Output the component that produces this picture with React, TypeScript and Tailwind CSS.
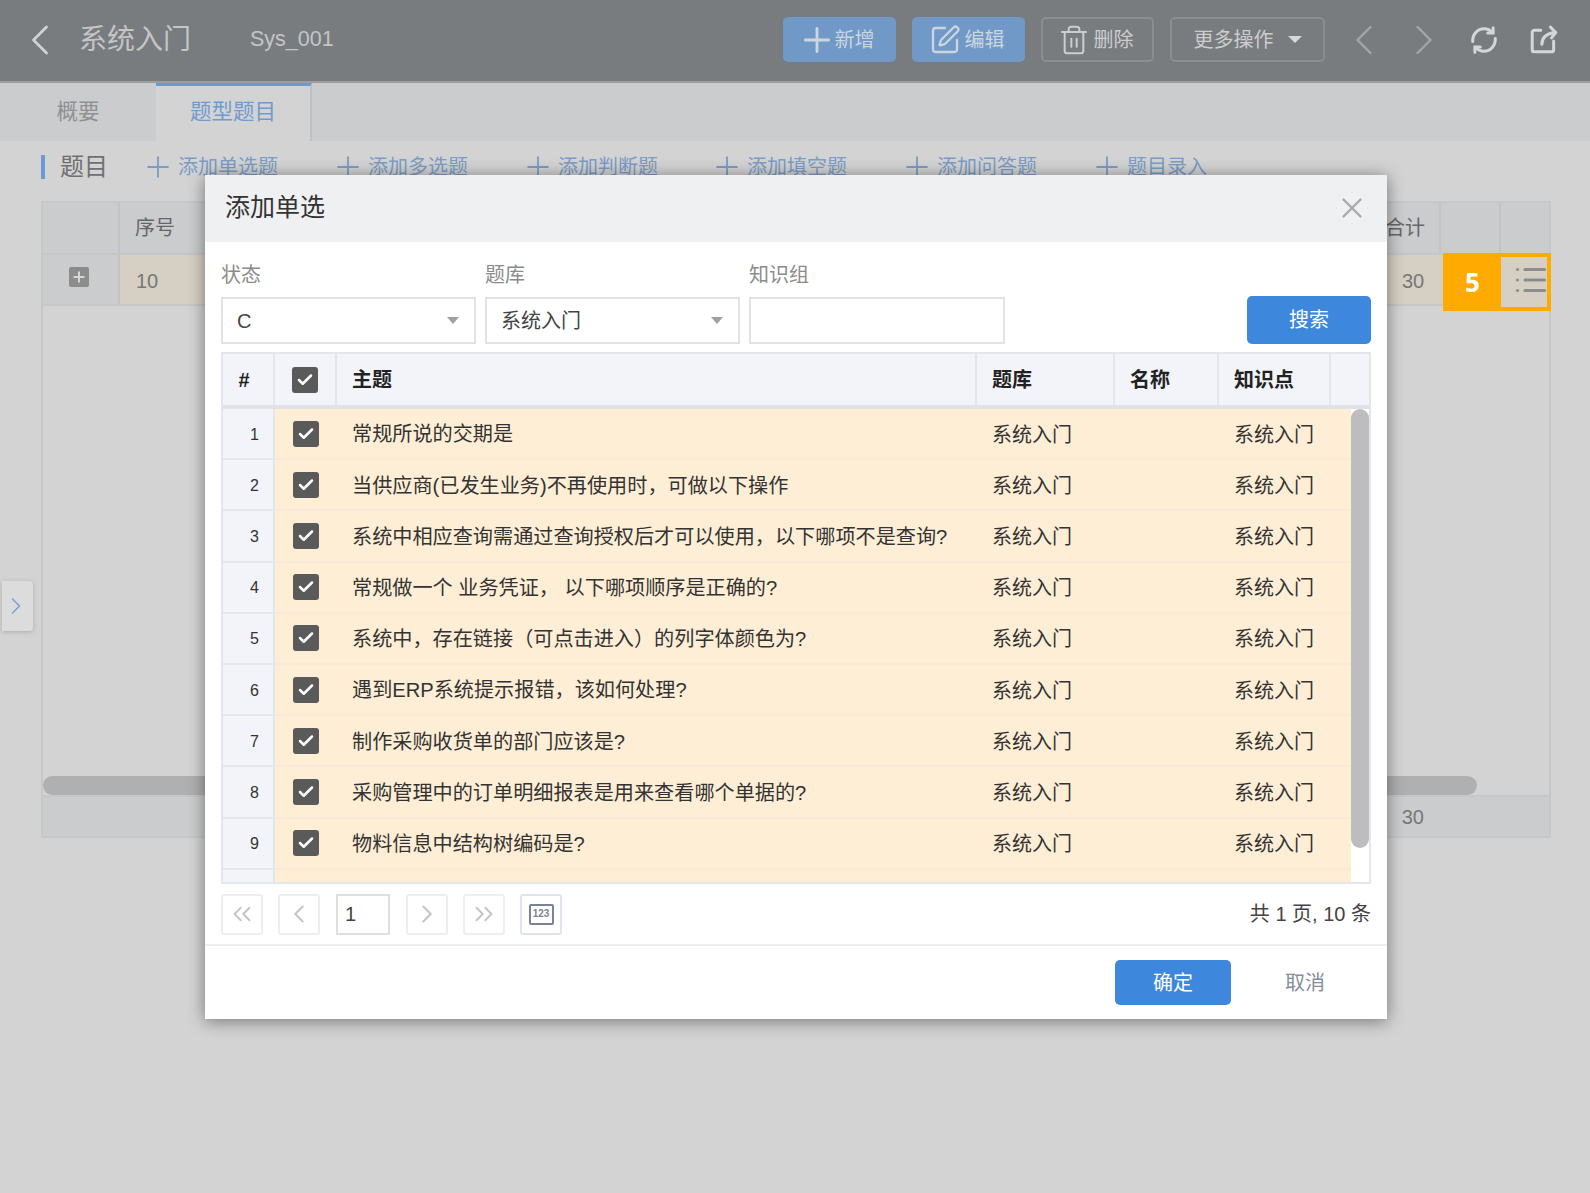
import { Plus, ChevronLeft, ChevronRight, ChevronsLeft, ChevronsRight, X, Check, SquarePen, Trash2, List } from "lucide-react";

const rows = [
  "常规所说的交期是",
  "当供应商(已发生业务)不再使用时，可做以下操作",
  "系统中相应查询需通过查询授权后才可以使用，以下哪项不是查询?",
  "常规做一个 业务凭证， 以下哪项顺序是正确的?",
  "系统中，存在链接（可点击进入）的列字体颜色为?",
  "遇到ERP系统提示报错，该如何处理?",
  "制作采购收货单的部门应该是?",
  "采购管理中的订单明细报表是用来查看哪个单据的?",
  "物料信息中结构树编码是?",
  "",
];

const addItems = [
  { label: "添加单选题", w: "w-[190px]" },
  { label: "添加多选题", w: "w-[190px]" },
  { label: "添加判断题", w: "w-[189px]" },
  { label: "添加填空题", w: "w-[190px]" },
  { label: "添加问答题", w: "w-[190px]" },
  { label: "题目录入", w: "w-[130px]" },
];

function Box() {
  return (
    <span className="flex h-[26px] w-[26px] items-center justify-center rounded-[3px] bg-[#5a5a5a]">
      <Check size={18} strokeWidth={3.4} className="text-white" />
    </span>
  );
}

function Caret() {
  return <span className="h-0 w-0 border-x-[6px] border-t-[7px] border-x-transparent border-t-[#a0a0a0]" />;
}

function PageBtn({ children, dark }: { children: React.ReactNode; dark?: boolean }) {
  return (
    <span className={`flex h-[41px] w-[42px] items-center justify-center rounded-[3px] border-2 ${dark ? "border-[#dfe3eb]" : "border-[#eeeeee]"} text-[#c4c4c4]`}>
      {children}
    </span>
  );
}

export default function App() {
  return (
    <div className="relative flex h-[1193px] w-[1590px] flex-col overflow-hidden bg-[#d3d3d3] font-['Liberation_Sans','Noto_Sans_CJK_SC',sans-serif]">
      {/* top bar */}
      <header className="flex h-[83px] shrink-0 items-center border-b-2 border-[#9a9c9e] bg-[#797c7e] pb-[2px] pl-[14px] text-[#c3c5c7]">
        <ChevronLeft size={52} strokeWidth={1.3} className="text-[#d0d2d4]" />
        <span className="ml-[13px] text-[28px] leading-none">系统入门</span>
        <span className="ml-[59px] text-[21.5px] leading-none">Sys_001</span>
        <div className="ml-auto flex h-[45px] items-center gap-[13px] pr-[31px] text-[20px]">
          <div className="flex gap-[16px]">
            <span className="flex h-[45px] w-[113px] items-center justify-center gap-[6px] rounded-[5px] bg-[#7099c8] text-[#cdd5de]">
              <Plus size={40} strokeWidth={1.7} className="-mx-[8px]" />新增
            </span>
            <span className="flex h-[45px] w-[113px] items-center justify-center gap-[8px] rounded-[5px] bg-[#7099c8] text-[#cdd5de]">
              <SquarePen size={32} strokeWidth={1.7} className="-mx-[4px]" />编辑
            </span>
            <span className="flex h-[45px] w-[113px] items-center justify-center gap-[8px] rounded-[5px] border-2 border-[#8a8d91] text-[#cbcdcf]">
              <Trash2 size={32} strokeWidth={1.5} className="-mx-[4px]" />删除
            </span>
            <span className="flex h-[45px] w-[155px] items-center justify-center gap-[14px] rounded-[5px] border-2 border-[#8a8d91] text-[#cbcdcf]">
              更多操作
              <span className="h-0 w-0 border-x-[7px] border-t-[7px] border-x-transparent border-t-[#d6d8da]" />
            </span>
          </div>
          <div className="flex items-center">
            <ChevronLeft size={52} strokeWidth={1.1} className="text-[#a3a5a7]" />
            <ChevronRight size={52} strokeWidth={1.1} className="ml-[8px] text-[#a3a5a7]" />
            <svg width="30" height="30" viewBox="0 0 28 28" fill="none" stroke="#d4d6d8" strokeWidth="2.8" strokeLinecap="round" className="ml-[19px]">
              <path d="M3.500 15.500C3 9 8 3.500 14 3.500c3.200 0 5.800 1.300 7.600 3.600" />
              <path d="M24.500 12.500c.5 6.500-4.500 12-10.500 12-3.200 0-5.800-1.300-7.600-3.600" />
              <path d="M22.500 2.500v5h-5" />
              <path d="M5.500 25.500v-5h5" />
            </svg>
            <svg width="30" height="30" viewBox="0 0 28 28" fill="none" stroke="#d4d6d8" strokeWidth="2.8" strokeLinecap="round" strokeLinejoin="round" className="ml-[30px]">
              <path d="M11 5H5a2 2 0 0 0-2 2v16a2 2 0 0 0 2 2h16a2 2 0 0 0 2-2v-8" />
              <path d="M12 18c0-6 3.500-10 12-11" />
              <path d="M20 2l5 5-4 5" />
            </svg>
          </div>
        </div>
      </header>

      {/* tabs */}
      <nav className="flex h-[58px] shrink-0 bg-[#cbcccd] text-[21.5px]">
        <span className="flex w-[156px] items-center justify-center text-[#8f9092]">概要</span>
        <span className="flex w-[156px] items-center justify-center border-t-[3px] border-r-2 border-t-[#6b9ad0] border-r-[#bfc0c1] bg-[#d3d3d3] pb-[2px] text-[#6f9bd0]">题型题目</span>
      </nav>

      {/* toolbar */}
      <div className="flex h-[60px] shrink-0 items-center pb-[8px] pl-[41px]">
        <span className="h-[24px] w-[4px] bg-[#6b9ad0]" />
        <span className="ml-[15px] w-[87px] text-[24px] leading-none text-[#707070]">题目</span>
        {addItems.map((a) => (
          <span key={a.label} className={`flex ${a.w} items-center gap-[3px] text-[20px] leading-none text-[#7a9cc6]`}>
            <Plus size={34} strokeWidth={1.3} className="-ml-[6px] shrink-0" />
            {a.label}
          </span>
        ))}
      </div>

      {/* background table */}
      <div className="ml-[41px] flex h-[637px] w-[1510px] flex-col border-2 border-[#c6c7c9] text-[20px] text-[#777777]">
        <div className="flex h-[50px] shrink-0 bg-[#cbcccd] text-[#666666]">
          <span className="w-[77px] border-r-2 border-[#c2c3c5]" />
          <span className="flex w-[100px] items-center pl-[15px]">序号</span>
          <span className="flex-1" />
          <span className="flex w-[69px] items-center pl-[15px]">合计</span>
          <span className="w-[62px] border-x-2 border-[#c2c3c5]" />
          <span className="w-[48px]" />
        </div>
        <div className="flex h-[53px] shrink-0 border-y-2 border-[#c6c7c9]">
          <span className="flex w-[77px] items-center justify-center border-r-2 border-[#c2c3c5] bg-[#cbcccd]">
            <span className="flex h-[20px] w-[20px] -translate-x-[2px] -translate-y-[3px] items-center justify-center rounded-[2px] bg-[#8c8c8c]">
              <Plus size={16} strokeWidth={3} className="text-[#d6d6d6]" />
            </span>
          </span>
          <span className="flex flex-1 items-center bg-[#d6cfc3] pl-[16px] pt-[2px]">
            <span className="flex-1">10</span>
            <span className="w-[147px]">30</span>
          </span>
        </div>
        <div className="flex-1" />
        <div className="mr-[72px] h-[19px] shrink-0 rounded-full bg-[#b0b0b0]" />
        <div className="flex h-[41px] shrink-0 items-center justify-end border-t-2 border-[#c6c7c9] bg-[#cbcccd] pr-[125px]">30</div>
      </div>

      {/* annotation highlight */}
      <div className="absolute left-[1443px] top-[253px] flex h-[58px] w-[108px] bg-[#ffaa00] p-[4px]">
        <span className="flex flex-1 items-center justify-center pr-[3px] font-['Noto_Sans',sans-serif] text-[26px] font-bold text-white">5</span>
        <span className="flex w-[46px] items-center justify-end bg-[#d6cfc3] text-[#8c8c8c]">
          <List size={36} strokeWidth={2.1} className="-mr-[2px] -translate-y-[2px]" />
        </span>
      </div>

      {/* side flap */}
      <div className="absolute left-[2px] top-[581px] flex h-[50px] w-[31px] items-center justify-center rounded-r-[4px] bg-[#dcdcdc] pr-[3px] text-[#7ba3d6] shadow-[0_1px_5px_rgba(0,0,0,0.18)]">
        <ChevronRight size={32} strokeWidth={1.4} />
      </div>

      {/* dialog */}
      <section className="absolute left-[205px] top-[175px] flex h-[844px] w-[1182px] flex-col bg-white text-[20px] shadow-[0_2px_16px_rgba(0,0,0,0.45)]">
        <div className="flex h-[67px] shrink-0 items-center justify-between bg-[#eff0f2] pb-[2px] pl-[20px] pr-[18px]">
          <span className="text-[25px] leading-none text-[#333333]">添加单选</span>
          <X size={34} strokeWidth={1.6} className="text-[#a9a9a9]" />
        </div>

        {/* filters */}
        <div className="flex h-[110px] shrink-0 px-[16px] pt-[21px]">
          <div className="flex w-[264px] flex-col gap-[10px]">
            <span className="h-[24px] leading-[24px] text-[#8b8b8b]">状态</span>
            <span className="flex h-[47px] w-[255px] items-center justify-between border-2 border-[#e3e3e3] pl-[14px] pr-[15px] text-[#444444]">C<Caret /></span>
          </div>
          <div className="flex w-[264px] flex-col gap-[10px]">
            <span className="h-[24px] leading-[24px] text-[#8b8b8b]">题库</span>
            <span className="flex h-[47px] w-[255px] items-center justify-between border-2 border-[#e3e3e3] pl-[14px] pr-[15px] text-[#444444]">系统入门<Caret /></span>
          </div>
          <div className="flex w-[256px] flex-col gap-[10px]">
            <span className="h-[24px] leading-[24px] text-[#8b8b8b]">知识组</span>
            <span className="h-[47px] w-[256px] border-2 border-[#e3e3e3]" />
          </div>
          <button className="ml-auto mt-[33px] flex h-[48px] w-[124px] items-center justify-center rounded-[5px] bg-[#3d87dd] text-white">搜索</button>
        </div>

        {/* grid */}
        <div className="relative mx-[16px] flex h-[532px] shrink-0 flex-col overflow-hidden border-2 border-[#e4e6ee] text-[#333333]">
          <div className="flex h-[55px] shrink-0 border-b-[4px] border-[#e0e2e8] bg-[#f2f4f9] font-bold text-[#222222]">
            <span className="flex w-[52px] items-center justify-center border-r-2 border-[#e4e6ee] pr-[8px]">#</span>
            <span className="flex w-[62px] items-center justify-center border-r-2 border-[#e4e6ee]"><Box /></span>
            <span className="flex w-[640px] items-center border-r-2 border-[#e4e6ee] pl-[15px]">主题</span>
            <span className="flex w-[138px] items-center border-r-2 border-[#e4e6ee] pl-[15px]">题库</span>
            <span className="flex w-[104px] items-center border-r-2 border-[#e4e6ee] pl-[15px]">名称</span>
            <span className="flex w-[112px] items-center border-r-2 border-[#e4e6ee] pl-[15px]">知识点</span>
          </div>
          <div className="flex flex-1 flex-col overflow-hidden pr-[18px]">
            {rows.map((r, i) => (
              <div key={i} className="flex h-[51.2px] shrink-0 border-b-2 border-[#f8ead6]">
                <span className="flex w-[52px] items-center justify-end bg-[#f2f4f9] pr-[16px] pt-[2px] text-[16px] shadow-[0_2px_0_#e4e6ee,inset_-2px_0_0_#e4e6ee]">{r ? i + 1 : ""}</span>
                <div className="flex flex-1 items-center bg-[#feeed5]">
                  <span className="flex w-[61px] justify-center">{r ? <Box /> : null}</span>
                  <span className="w-[642px] whitespace-nowrap pl-[16px] pt-[2px] text-[20.15px]">{r}</span>
                  <span className="w-[242px] pl-[14px] pt-[2px]">{r ? "系统入门" : ""}</span>
                  <span className="pl-[14px] pt-[2px]">{r ? "系统入门" : ""}</span>
                </div>
              </div>
            ))}
          </div>
          <div className="absolute right-0 top-[55px] h-[439px] w-[18px] rounded-full bg-[#bdbdbd]" />
        </div>

        {/* pager */}
        <div className="flex h-[62px] shrink-0 items-center border-b-2 border-[#eeeeee] px-[16px]">
          <PageBtn><ChevronsLeft size={30} strokeWidth={1.5} /></PageBtn>
          <span className="ml-[15px]"><PageBtn><ChevronLeft size={30} strokeWidth={1.5} /></PageBtn></span>
          <span className="ml-[16px] flex h-[41px] w-[54px] items-center border-2 border-[#dfdfdf] pl-[7px] text-[#444444]">1</span>
          <span className="ml-[16px]"><PageBtn><ChevronRight size={30} strokeWidth={1.5} /></PageBtn></span>
          <span className="ml-[15px]"><PageBtn><ChevronsRight size={30} strokeWidth={1.5} /></PageBtn></span>
          <span className="ml-[15px]">
            <PageBtn dark>
              <span className="flex h-[21px] w-[25px] items-center justify-center rounded-[2px] border-2 border-[#7a8296] text-[10px] font-bold leading-none text-[#7a8296]">123</span>
            </PageBtn>
          </span>
          <span className="ml-auto text-[#444444]">共 1 页, 10 条</span>
        </div>

        {/* footer */}
        <div className="flex flex-1 items-start pl-[910px] pt-[14px]">
          <button className="flex h-[45px] w-[116px] items-center justify-center rounded-[5px] bg-[#3d87dd] text-white">确定</button>
          <span className="ml-[54px] flex h-[45px] items-center text-[#868c9b]">取消</span>
        </div>
      </section>
    </div>
  );
}
